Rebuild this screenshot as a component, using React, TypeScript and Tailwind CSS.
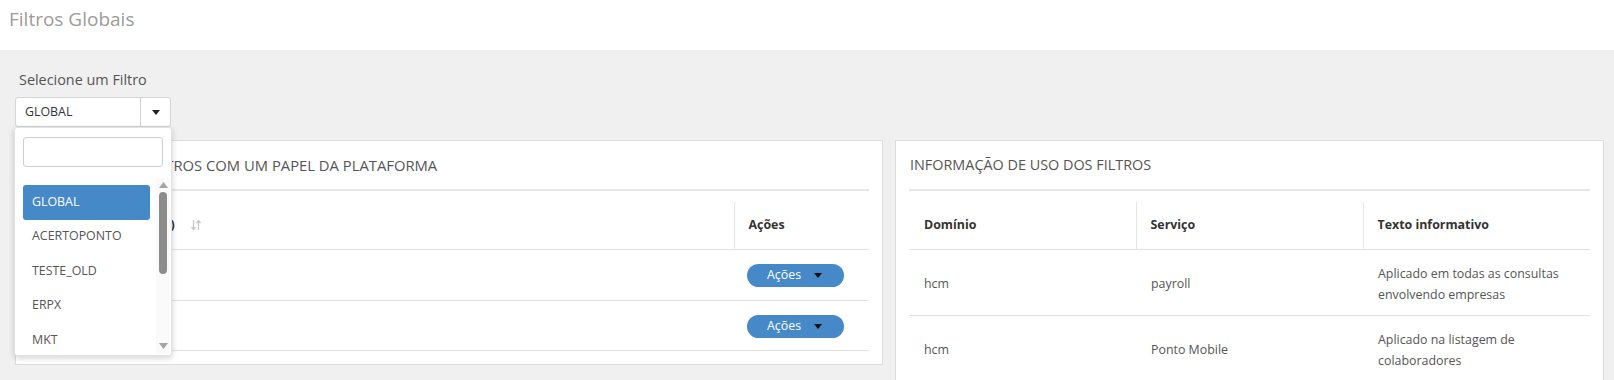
const Caret = ({ className }: { className?: string }) => (
  <svg width="8" height="5" viewBox="0 0 8 5" className={className}>
    <path d="M0 0h8L4 5z" fill="currentColor" />
  </svg>
);

const SortIcon = () => (
  <svg width="10" height="12" viewBox="0 0 10 12" className="text-[#c8c8c8]">
    <path d="M2.5 1v9M0.5 8l2 2.5 2-2.5" stroke="currentColor" strokeWidth="1.3" fill="none" />
    <path d="M7.5 11V2M5.5 4l2-2.5 2 2.5" stroke="currentColor" strokeWidth="1.3" fill="none" />
  </svg>
);

const ActionButton = () => (
  <button className="flex h-[23px] w-[97px] items-center rounded-full bg-[#4589c8] pl-[20px] text-[12.4px] leading-none text-white">
    <span>Ações</span>
    <Caret className="ml-[13px] text-[#111]" />
  </button>
);

const items = ["GLOBAL", "ACERTOPONTO", "TESTE_OLD", "ERPX", "MKT"];

export default function App() {
  return (
    <div className="relative h-[380px] w-[1614px] overflow-hidden bg-[#f0f0f0] font-['Open_Sans',sans-serif] text-[#555]">
      <div className="h-[50px] bg-white pl-[9px] pt-[6px]">
        <h1 className="text-[19px] leading-[26px] text-[#9b9b9b]">Filtros Globais</h1>
      </div>

      <div className="pl-[15px]">
        <div className="pl-[4px] pt-[20px] text-[14.4px] leading-[20px] text-[#555]">Selecione um Filtro</div>

        <div className="relative z-10 mt-[7px] w-[156px]">
          <div className="flex h-[30px] w-[156px] items-stretch rounded-[3px] border border-[#d5d5d5] bg-white">
            <div className="flex flex-1 items-center pl-[9px] text-[12.4px] text-[#333]">GLOBAL</div>
            <div className="flex w-[30px] items-center justify-center border-l border-[#d5d5d5]">
              <Caret className="text-[#222]" />
            </div>
          </div>

          <div className="absolute left-[-1px] top-[30px] h-[229px] w-[158px] rounded-[3px] border border-[#e2e2e2] bg-white shadow-[0_2px_6px_rgba(0,0,0,0.18)]">
            <div className="ml-[8px] mt-[9px] h-[30px] w-[140px] rounded-[3px] border border-[#cfcfcf] bg-white" />
            <div className="relative mt-[11px] h-[176px] overflow-hidden">
              <div className="ml-[8px] w-[127px] pt-[7px]">
                {items.map((it, i) => (
                  <div
                    key={it}
                    className={
                      i === 0
                        ? "flex h-[34.5px] items-center rounded-[3px] bg-[#4589c8] pl-[9px] text-[12.4px] text-white"
                        : "flex h-[34.5px] items-center pl-[9px] text-[12.4px] text-[#555]"
                    }
                  >
                    {it}
                  </div>
                ))}
              </div>
              <div className="absolute right-[1px] top-0 h-full w-[14px] bg-[#fafafa]">
                <svg width="9" height="6" viewBox="0 0 9 6" className="absolute left-[3px] top-[4px] text-[#a3a3a3]">
                  <path d="M0 6L4.5 0 9 6z" fill="currentColor" />
                </svg>
                <div className="absolute left-[3px] top-[14px] h-[82px] w-[8px] rounded-[4px] bg-[#8c8c8c]" />
                <svg width="9" height="6" viewBox="0 0 9 6" className="absolute bottom-[5px] left-[3px] text-[#a3a3a3]">
                  <path d="M0 0h9L4.5 6z" fill="currentColor" />
                </svg>
              </div>
            </div>
          </div>
        </div>

        <div className="mt-[13px] flex items-start gap-[12px]">
          <div className="w-[868px] border border-[#dcdcdc] bg-white px-[13px] pb-[13px] pt-[14px]">
            <div className="text-[14.8px] leading-[20px] text-[#555]">ASSOCIAÇÃO DE FILTROS COM UM PAPEL DA PLATAFORMA</div>
            <div className="mt-[14px] h-[2px] bg-[#e6e6e6]" />
            <table className="mt-[11px] w-full border-collapse text-[12.4px]">
              <thead>
                <tr className="h-[47px] border-b border-[#e2e2e2]">
                  <th className="px-[15px] text-left font-bold text-[#333]">
                    <div className="flex items-center gap-[16px]">
                      <span>Nome dos papéis (ID)</span>
                      <SortIcon />
                    </div>
                  </th>
                  <th className="w-[135px] border-l border-[#e6e6e6] px-[14px] text-left font-bold text-[#333]">Ações</th>
                </tr>
              </thead>
              <tbody>
                <tr className="h-[51px] border-b border-[#e2e2e2]">
                  <td className="px-[15px] pt-[2px] text-[#555]">ADMIN</td>
                  <td className="pl-[13px] pt-[2px]">
                    <ActionButton />
                  </td>
                </tr>
                <tr className="h-[50px] border-b border-[#e2e2e2]">
                  <td className="px-[15px] pt-[2px] text-[#555]">RH</td>
                  <td className="pl-[13px] pt-[2px]">
                    <ActionButton />
                  </td>
                </tr>
              </tbody>
            </table>
          </div>

          <div className="h-[300px] w-[709px] border border-[#dcdcdc] bg-white px-[13px] pt-[14px]">
            <div className="pl-[1px] text-[14.4px] leading-[20px] text-[#555]">INFORMAÇÃO DE USO DOS FILTROS</div>
            <div className="mt-[14px] h-[2px] bg-[#e6e6e6]" />
            <table className="mt-[11px] w-full table-fixed border-collapse text-[12.4px]">
              <thead>
                <tr className="h-[47px] border-b border-[#e2e2e2]">
                  <th className="px-[15px] text-left font-bold text-[#333]">Domínio</th>
                  <th className="border-l border-[#e6e6e6] px-[14px] text-left font-bold text-[#333]">Serviço</th>
                  <th className="border-l border-[#e6e6e6] px-[14px] text-left font-bold text-[#333]">Texto informativo</th>
                </tr>
              </thead>
              <tbody>
                <tr className="h-[66px] border-b border-[#e2e2e2]">
                  <td className="px-[15px] pt-[4px] text-[#555]">hcm</td>
                  <td className="px-[15px] pt-[4px] text-[#555]">payroll</td>
                  <td className="px-[15px] pt-[4px] leading-[21px] text-[#555]">
                    Aplicado em todas as consultas
                    <br />
                    envolvendo empresas
                  </td>
                </tr>
                <tr className="h-[66px]">
                  <td className="px-[15px] pt-[4px] text-[#555]">hcm</td>
                  <td className="px-[15px] pt-[4px] text-[#555]">Ponto Mobile</td>
                  <td className="px-[15px] pt-[4px] leading-[21px] text-[#555]">
                    Aplicado na listagem de
                    <br />
                    colaboradores
                  </td>
                </tr>
              </tbody>
            </table>
          </div>
        </div>
      </div>
    </div>
  );
}
